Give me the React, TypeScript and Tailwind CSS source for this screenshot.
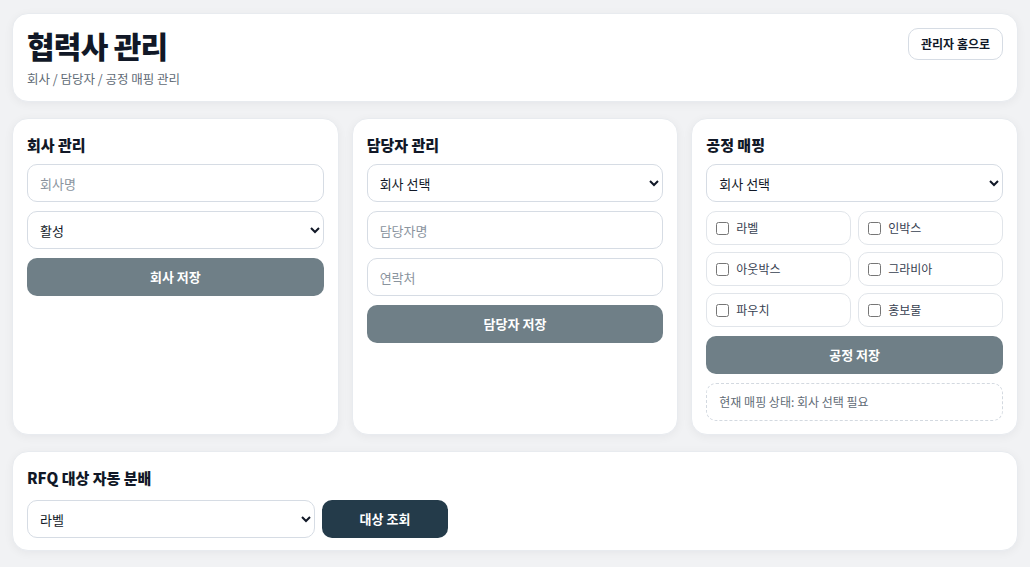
import React from 'react';

const inputCls =
  'w-full h-[38px] rounded-[10px] border border-[#d6dce4] bg-white px-3 text-[13px] text-[#111827] placeholder:text-[#8a949e] outline-none';

const selectCls =
  'w-full h-[38px] rounded-[10px] border border-[#d6dce4] bg-white px-2 text-[13px] text-[#111827] outline-none';

const cardCls =
  'rounded-[16px] bg-white border border-[#e8ebef] shadow-[0_2px_10px_rgba(15,23,42,0.05)]';

function SaveButton({ label }: { label: string }) {
  return (
    <button className="w-full h-[38px] rounded-[10px] bg-[#6f7f87] text-white text-[13px] font-bold">
      {label}
    </button>
  );
}

const processes = ['라벨', '인박스', '아웃박스', '그라비아', '파우치', '홍보물'];

export default function App() {
  return (
    <div
      className="min-h-screen bg-[#f1f2f4] px-3 pt-[13px] pb-3 flex flex-col gap-4"
      style={{ fontFamily: '"Noto Sans CJK KR", "Noto Sans", sans-serif' }}
    >
      {/* Header */}
      <div className={`${cardCls} h-[89px] shrink-0 px-[14px] pt-[10px] flex justify-between items-start`}>
        <div>
          <h1 className="text-[30px] font-black text-[#111827] leading-[42px] tracking-tight">협력사 관리</h1>
          <p className="mt-[4px] text-[12.5px] text-[#5f6b76]">회사 / 담당자 / 공정 매핑 관리</p>
        </div>
        <button className="mt-[4px] h-[32px] px-3 rounded-[10px] border border-[#d6dce4] bg-white text-[12px] font-bold text-[#111827]">
          관리자 홈으로
        </button>
      </div>

      {/* Three columns */}
      <div className="grid grid-cols-3 gap-[13px] shrink-0">
        <div className={`${cardCls} h-[317px] px-[14px] pt-[14px]`}>
          <h2 className="text-[15px] font-extrabold text-[#111827] leading-[24px]">회사 관리</h2>
          <div className="mt-[7px] flex flex-col gap-[9px]">
            <input className={inputCls} placeholder="회사명" />
            <select className={selectCls} defaultValue="활성">
              <option>활성</option>
              <option>비활성</option>
            </select>
            <SaveButton label="회사 저장" />
          </div>
        </div>

        <div className={`${cardCls} h-[317px] px-[14px] pt-[14px]`}>
          <h2 className="text-[15px] font-extrabold text-[#111827] leading-[24px]">담당자 관리</h2>
          <div className="mt-[7px] flex flex-col gap-[9px]">
            <select className={selectCls}>
              <option>회사 선택</option>
            </select>
            <input className={inputCls} placeholder="담당자명" />
            <input className={inputCls} placeholder="연락처" />
            <SaveButton label="담당자 저장" />
          </div>
        </div>

        <div className={`${cardCls} h-[317px] px-[14px] pt-[14px]`}>
          <h2 className="text-[15px] font-extrabold text-[#111827] leading-[24px]">공정 매핑</h2>
          <div className="mt-[7px] flex flex-col gap-[9px]">
            <select className={selectCls}>
              <option>회사 선택</option>
            </select>
            <div className="grid grid-cols-2 gap-x-[7px] gap-y-[7px]">
              {processes.map((p) => (
                <label
                  key={p}
                  className="h-[34px] rounded-[10px] border border-[#e1e5ea] flex items-center gap-[7px] px-[9px] text-[12px] text-[#374151]"
                >
                  <input type="checkbox" className="w-[13px] h-[13px] m-0" />
                  {p}
                </label>
              ))}
            </div>
            <SaveButton label="공정 저장" />
            <div className="h-[38px] rounded-[10px] border border-dashed border-[#d3d9e0] flex items-center px-3 text-[12px] text-[#5f6b76]">
              현재 매핑 상태: 회사 선택 필요
            </div>
          </div>
        </div>
      </div>

      {/* Bottom */}
      <div className={`${cardCls} h-[100px] shrink-0 px-[14px] pt-[14px]`}>
        <h2 className="text-[15px] font-extrabold text-[#111827] leading-[24px]">RFQ 대상 자동 분배</h2>
        <div className="mt-[10px] flex gap-[7px]">
          <select className={`${selectCls} !w-[288px]`}>
            <option>라벨</option>
          </select>
          <button className="w-[126px] h-[38px] rounded-[10px] bg-[#243b4a] text-white text-[13px] font-bold">
            대상 조회
          </button>
        </div>
      </div>
    </div>
  );
}
